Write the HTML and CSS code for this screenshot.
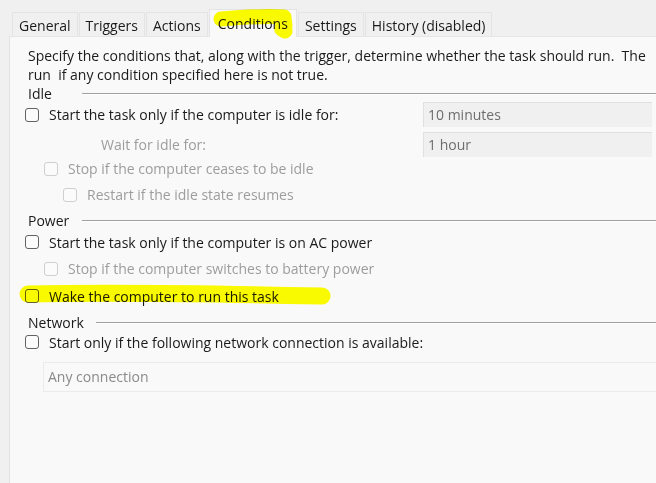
FILE: index.html
```html
<!DOCTYPE html>
<html>
<head>
<meta charset="utf-8">
<link rel="stylesheet" href="styles.css">
</head>
<body>
<div class="window">
  <div class="tabs">
    <div class="tab">General</div>
    <div class="tab">Triggers</div>
    <div class="tab">Actions</div>
    <div class="tab selected">Conditions</div>
    <div class="tab">Settings</div>
    <div class="tab">History (disabled)</div>
  </div>
  <div class="panel">
    <p class="desc">Specify the conditions that, along with the trigger, determine whether the task should run.&nbsp; The<br>run&nbsp; if any condition specified here is not true.</p>

    <div class="group-head idle-head"><span class="group-label">Idle</span><span class="rule"></span></div>
    <div class="row field-row r-idle">
      <label class="cb"><span class="box"></span>Start the task only if the computer is idle for:</label>
      <div class="field">10 minutes</div>
    </div>
    <div class="row field-row r-wait">
      <span class="dim wait-label">Wait for idle for:</span>
      <div class="field">1 hour</div>
    </div>
    <div class="row r-stop indent1">
      <label class="cb dim"><span class="box"></span>Stop if the computer ceases to be idle</label>
    </div>
    <div class="row r-restart indent2">
      <label class="cb dim"><span class="box"></span>Restart if the idle state resumes</label>
    </div>

    <div class="group-head power-head"><span class="group-label">Power</span><span class="rule"></span></div>
    <div class="row r-ac">
      <label class="cb"><span class="box"></span>Start the task only if the computer is on AC power</label>
    </div>
    <div class="row r-battery indent1">
      <label class="cb dim"><span class="box"></span>Stop if the computer switches to battery power</label>
    </div>
    <div class="row r-wake">
      <label class="cb"><span class="box"></span>Wake the computer to run this task</label>
    </div>

    <div class="group-head net-head"><span class="group-label">Network</span><span class="rule"></span></div>
    <div class="row r-net">
      <label class="cb"><span class="box"></span>Start only if the following network connection is available:</label>
    </div>
    <div class="combo">Any connection</div>
  </div>

  <svg class="hl hl-tab" width="96" height="36" viewBox="0 0 96 36">
    <path d="M17 15 C 40 13, 62 12, 80 13 L 81 22 C 77 24, 76 25, 81 27" fill="none" stroke="#ffff00" stroke-width="15" stroke-linecap="round" stroke-linejoin="round"/>
  </svg>
  <svg class="hl hl-wake" width="340" height="34" viewBox="0 0 340 34">
    <path d="M16 14 C 100 12, 220 14, 310 16" fill="none" stroke="#ffff00" stroke-width="17" stroke-linecap="round"/>
  </svg>
</div>
</body>
</html>
```
FILE: styles.css
```css
html, body {
  margin: 0;
  padding: 0;
  overflow: hidden;
  background: #f0f0f0;
}
body {
  width: 656px;
  height: 483px;
  font-family: "Open Sans", "Noto Sans", sans-serif;
  font-size: 14px;
  color: #1a1a1a;
}
.window {
  position: relative;
  width: 656px;
  height: 483px;
  overflow: hidden;
}
.tabs {
  display: flex;
  align-items: flex-end;
  height: 36px;
  padding-left: 12px;
  box-sizing: border-box;
}
.tab {
  height: 24px;
  line-height: 25px;
  padding: 0 6px;
  border: 1px solid #e4e4e4;
  border-bottom: none;
  margin-right: 1px;
  background: #f0f0f0;
  box-sizing: border-box;
  white-space: nowrap;
}
.tab.selected {
  height: 28px;
  line-height: 27px;
  padding: 0 8px;
  background: #f9f9f9;
  margin-bottom: -1px;
  position: relative;
  z-index: 2;
}
.panel {
  margin-left: 9px;
  width: 700px;
  height: 460px;
  background: #f9f9f9;
  border-left: 1px solid #e2e2e2;
  border-top: 1px solid #e6e6e6;
  box-sizing: border-box;
  padding: 9px 0 0 18px;
  display: flex;
  flex-direction: column;
}
.desc {
  margin: 0;
  line-height: 19px;
  white-space: nowrap;
}
.group-head {
  display: flex;
  align-items: center;
  height: 18px;
}
.group-label {
  min-width: 42px;
  margin-right: 12px;
}
.rule {
  flex: 1;
  height: 1px;
  background: #a0a0a0;
  border-bottom: 1px solid #ffffff;
  margin-top: 2px;
}
.row {
  display: flex;
  align-items: center;
  height: 26px;
}
.field-row {
  display: grid;
  grid-template-columns: 395px 229px;
  align-items: center;
}
.r-idle { height: 25px; }
.r-wait { height: 24px; margin-top: 5px; }
.r-stop { height: 25px; }
.r-restart { height: 27px; }
.power-head { margin-top: 3px; }
.r-ac { height: 26px; }
.r-battery { height: 27px; }
.r-wake { height: 28px; }
.net-head { margin-top: 3px; }
.r-net { height: 22px; }
.indent1 { padding-left: 19px; }
.indent2 { padding-left: 38px; }
.cb {
  display: flex;
  align-items: center;
  white-space: nowrap;
  position: relative;
  left: -3px;
}
.box {
  width: 14px;
  height: 14px;
  box-sizing: border-box;
  border: 1px solid #626262;
  border-radius: 3px;
  background: #fbfbfb;
  margin-right: 10px;
  flex: none;
}
.dim { color: #9d9d9d; }
.cb.dim .box { border-color: #cfcfcf; }
.wait-label { padding-left: 73px; }
.field {
  height: 25px;
  box-sizing: border-box;
  border-top: 1px solid #e0e0e0;
  border-left: 1px solid #e0e0e0;
  background: #f0f0f0;
  padding-left: 4px;
  line-height: 23px;
  color: #6d6d6d;
  white-space: nowrap;
}
.combo {
  margin-top: 9px;
  margin-left: 15px;
  height: 30px;
  box-sizing: border-box;
  border: 1px solid #ebebeb;
  line-height: 28px;
  padding-left: 4px;
  color: #8a8a8a;
}
.hl {
  position: absolute;
  z-index: 5;
  mix-blend-mode: multiply;
  pointer-events: none;
}
.hl-tab { left: 204px; top: 4px; }
.hl-wake { left: 12px; top: 280px; }
```
